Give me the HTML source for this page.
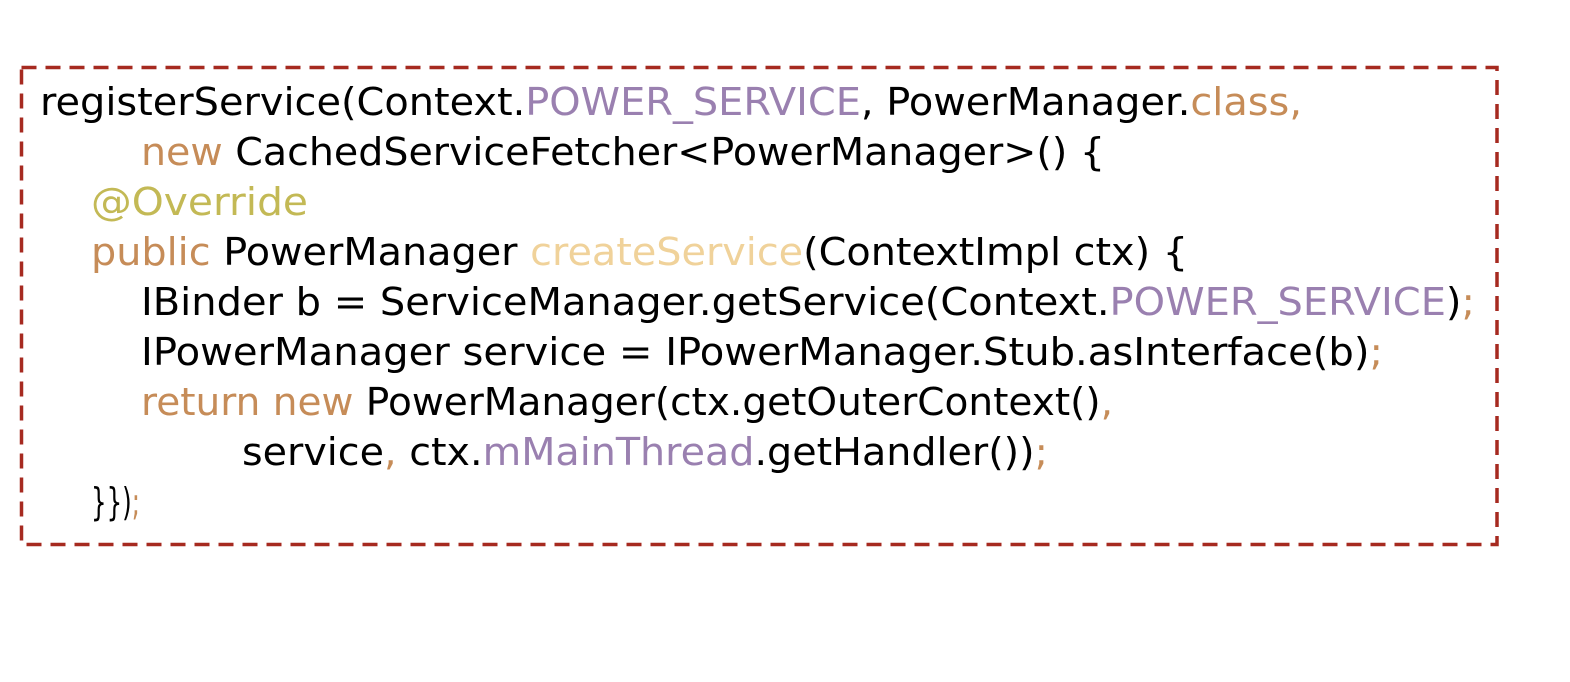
<!DOCTYPE html>
<html><head><meta charset="utf-8"><style>
html,body{margin:0;padding:0;background:#fff;width:1570px;height:682px;overflow:hidden}
svg text{font-family:"DejaVu Sans","Liberation Sans",sans-serif;font-size:38px}
.p{fill:#9a80b0}.o{fill:#c68c58}.y{fill:#c3b955}.l{fill:#f0d29a}
</style></head><body>
<svg width="1570" height="682" xmlns="http://www.w3.org/2000/svg">
<rect x="21.5" y="67.5" width="1475.5" height="477" fill="none" stroke="#a62a20" stroke-width="3.5" stroke-dasharray="15 9"/>
<text x="40" y="115" textLength="1262" lengthAdjust="spacingAndGlyphs">registerService(Context.<tspan class="p">POWER_SERVICE</tspan>, PowerManager.<tspan class="o">class,</tspan></text>
<text x="141" y="165" textLength="964" lengthAdjust="spacingAndGlyphs"><tspan class="o">new</tspan> CachedServiceFetcher&lt;PowerManager&gt;() {</text>
<text x="91" y="215" textLength="217" lengthAdjust="spacingAndGlyphs" class="y">@Override</text>
<text x="91" y="265" textLength="1097" lengthAdjust="spacingAndGlyphs"><tspan class="o">public</tspan> PowerManager <tspan class="l">createService</tspan>(ContextImpl ctx) {</text>
<text x="141" y="315" textLength="1334" lengthAdjust="spacingAndGlyphs">IBinder b = ServiceManager.getService(Context.<tspan class="p">POWER_SERVICE</tspan>)<tspan class="o">;</tspan></text>
<text x="141" y="365" textLength="1242" lengthAdjust="spacingAndGlyphs">IPowerManager service = IPowerManager.Stub.asInterface(b)<tspan class="o">;</tspan></text>
<text x="141" y="415" textLength="972" lengthAdjust="spacingAndGlyphs"><tspan class="o">return new</tspan> PowerManager(ctx.getOuterContext()<tspan class="o">,</tspan></text>
<text x="242" y="465" textLength="806" lengthAdjust="spacingAndGlyphs">service<tspan class="o">,</tspan> ctx.<tspan class="p">mMainThread</tspan>.getHandler())<tspan class="o">;</tspan></text>
<text x="91" y="515" textLength="49" lengthAdjust="spacingAndGlyphs">}})<tspan class="o">;</tspan></text>
</svg>
</body></html>
